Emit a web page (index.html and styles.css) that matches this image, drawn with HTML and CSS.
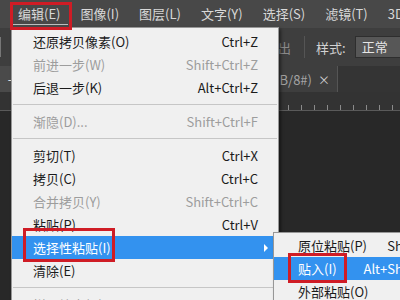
FILE: index.html
```html
<!DOCTYPE html>
<html lang="zh-CN">
<head>
<meta charset="utf-8">
<title>Photoshop 编辑菜单</title>
<link rel="stylesheet" href="styles.css">
</head>
<body>
<div class="app">
  <nav class="menubar">
    <span class="mb-item active">编辑(E)</span>
    <span class="mb-item">图像(I)</span>
    <span class="mb-item">图层(L)</span>
    <span class="mb-item">文字(Y)</span>
    <span class="mb-item">选择(S)</span>
    <span class="mb-item">滤镜(T)</span>
    <span class="mb-item">3D(D)</span>
  </nav>
  <div class="optbar">
    <span class="tool-box"></span>
    <span class="opt-dim">调出</span>
    <span class="opt-sep"></span>
    <span class="opt-label">样式:</span>
    <span class="opt-select">正常</span>
  </div>
  <div class="tabbar">
    <span class="tab-edge">-</span>
    <span class="tab"><span class="tab-title">未标题-1 @ 66.7%(RGB/8#)</span><span class="tab-x">×</span></span>
  </div>
  <div class="ruler"></div>
  <div class="canvas"></div>
</div>

<div class="menu main">
  <div class="row"><span class="label">还原拷贝像素(O)</span><span class="key">Ctrl+Z</span></div>
  <div class="row dis"><span class="label">前进一步(W)</span><span class="key">Shift+Ctrl+Z</span></div>
  <div class="row"><span class="label">后退一步(K)</span><span class="key">Alt+Ctrl+Z</span></div>
  <div class="sep"></div>
  <div class="row dis"><span class="label">渐隐(D)...</span><span class="key">Shift+Ctrl+F</span></div>
  <div class="sep"></div>
  <div class="row"><span class="label">剪切(T)</span><span class="key">Ctrl+X</span></div>
  <div class="row"><span class="label">拷贝(C)</span><span class="key">Ctrl+C</span></div>
  <div class="row dis"><span class="label">合并拷贝(Y)</span><span class="key">Shift+Ctrl+C</span></div>
  <div class="row"><span class="label">粘贴(P)</span><span class="key">Ctrl+V</span></div>
  <div class="row hl"><span class="label">选择性粘贴(I)</span><span class="arrow"></span></div>
  <div class="row"><span class="label">清除(E)</span></div>
  <div class="sep"></div>
  <div class="row dis"><span class="label">拼写检查(H)...</span></div>
  <div class="row dis"><span class="label">查找和替换文本(X)...</span></div>
</div>

<div class="menu sub">
  <div class="row"><span class="label">原位粘贴(P)</span><span class="key">Shift+Ctrl+V</span></div>
  <div class="row hl"><span class="label">贴入(I)</span><span class="key">Alt+Shift+Ctrl+V</span></div>
  <div class="row"><span class="label">外部粘贴(O)</span></div>
</div>

<div class="mark mark-menu"></div>
<div class="mark mark-item"></div>
<div class="mark mark-sub"></div>
</body>
</html>
```
FILE: styles.css
```css
html, body {
  margin: 0;
  padding: 0;
  overflow: hidden;
}
body {
  width: 400px;
  height: 300px;
  position: relative;
  background: #282828;
  font-family: "Noto Sans CJK SC", "Noto Sans", sans-serif;
  font-size: 13px;
}
.app {
  display: flex;
  flex-direction: column;
  height: 300px;
}
.menubar {
  flex: none;
  height: 28px;
  background: #484848;
  display: flex;
  align-items: center;
  padding-left: 8px;
  color: #d8d8d8;
}
.mb-item {
  padding: 0 10px;
  line-height: 28px;
  white-space: nowrap;
}
.mb-item.active {
  position: relative;
}
.mb-item.active::after {
  content: "";
  position: absolute;
  left: 5px;
  right: 2px;
  bottom: 3px;
  height: 1px;
  background: #bdbdbd;
}
.optbar {
  flex: none;
  height: 38px;
  background: #3e3e3e;
  display: flex;
  align-items: center;
  white-space: nowrap;
}
.tool-box {
  width: 8px;
  height: 20px;
  background: #5e5e5e;
  border-right: 1px solid #777;
}
.opt-dim {
  margin-left: 264px;
  color: #8a8a8a;
}
.opt-sep {
  width: 1px;
  height: 22px;
  background: #2a2a2a;
  border-right: 1px solid #555;
  margin-left: 13px;
}
.opt-label {
  margin-left: 11px;
  color: #d2d2d2;
}
.opt-select {
  margin-left: 9px;
  height: 20px;
  line-height: 20px;
  padding: 0 20px 0 6px;
  background: #575757;
  border: 1px solid #2e2e2e;
  color: #e6e6e6;
}
.tabbar {
  flex: none;
  height: 26px;
  background: #343434;
  display: flex;
  align-items: stretch;
}
.tab-edge {
  width: 12px;
  background: #4a4a4a;
  color: #eee;
  text-align: right;
  line-height: 26px;
  font-size: 12px;
}
.tab {
  width: 326px;
  background: #3e3e3e;
  border-right: 1px solid #555;
  display: flex;
  justify-content: flex-end;
  align-items: center;
  overflow: hidden;
  color: #a4a4a4;
  white-space: nowrap;
  padding-right: 7px;
  box-sizing: border-box;
}
.tab-x {
  margin-left: 6px;
  color: #cfcfcf;
  font-size: 12px;
}
.ruler {
  flex: none;
  height: 18px;
  background-color: #333;
  border-bottom: 1px solid #5a5a5a;
  background-image: repeating-linear-gradient(90deg, transparent 0 12px, #8a8a8a 12px 13px);
  background-size: 100% 5px;
  background-repeat: no-repeat;
  background-position: 3px 100%;
}
.canvas {
  flex: 1;
  background: #282828;
}

.menu {
  position: absolute;
  background: #f0f0f0;
  border: 1px solid #979797;
  box-shadow: 2px 2px 3px rgba(0, 0, 0, 0.45);
  color: #1b1b1b;
  white-space: nowrap;
}
.main {
  left: 11px;
  top: 27px;
  width: 266px;
  padding: 2px 0;
}
.sub {
  left: 273px;
  top: 232px;
  width: 205px;
  padding: 1px 0;
}
.row {
  display: flex;
  align-items: center;
  height: 23px;
  line-height: 23px;
  padding: 0 20px 0 21px;
}
.sub .row {
  padding-left: 24px;
}
.label {
  flex: 1;
}
.row.dis {
  color: #9d9d9d;
}
.row.hl {
  background: #3392ef;
  color: #fff;
}
.arrow {
  width: 0;
  height: 0;
  border-left: 4px solid #fff;
  border-top: 4px solid transparent;
  border-bottom: 4px solid transparent;
  margin-right: -10px;
}
.sep {
  height: 1px;
  background: #c6c6c6;
  margin: 5px 1px;
}
.mark {
  position: absolute;
  border: 3px solid #cf1c25;
  box-sizing: border-box;
}
.mark-menu {
  left: 10px;
  top: 2px;
  width: 62px;
  height: 28px;
}
.mark-item {
  left: 23px;
  top: 228px;
  width: 92px;
  height: 34px;
}
.mark-sub {
  left: 288px;
  top: 253px;
  width: 59px;
  height: 30px;
}
```
